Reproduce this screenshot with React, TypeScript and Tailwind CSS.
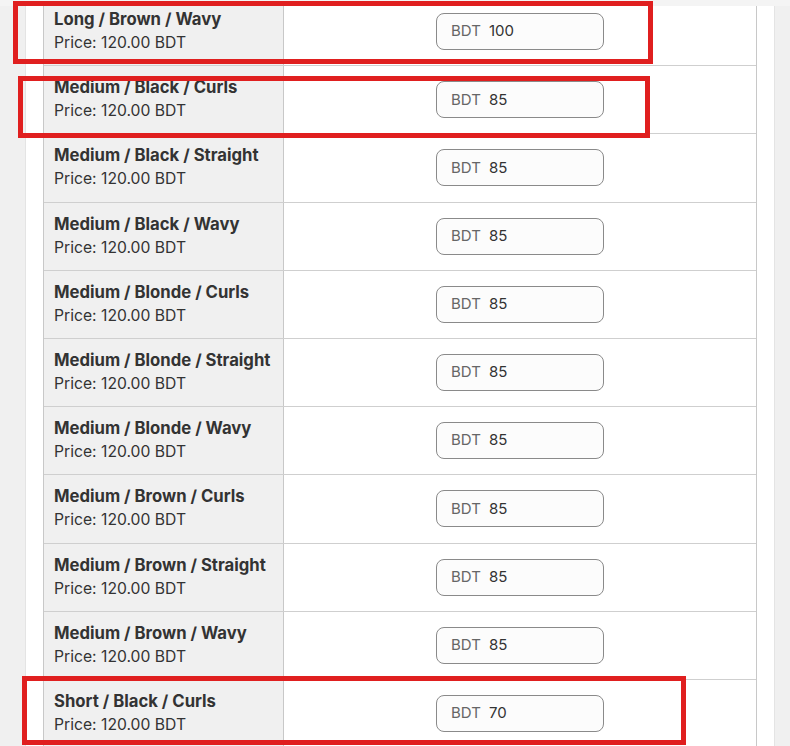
import React from "react";

const rows = [
  { name: "Long / Brown / Wavy", price: "100" },
  { name: "Medium / Black / Curls", price: "85" },
  { name: "Medium / Black / Straight", price: "85" },
  { name: "Medium / Black / Wavy", price: "85" },
  { name: "Medium / Blonde / Curls", price: "85" },
  { name: "Medium / Blonde / Straight", price: "85" },
  { name: "Medium / Blonde / Wavy", price: "85" },
  { name: "Medium / Brown / Curls", price: "85" },
  { name: "Medium / Brown / Straight", price: "85" },
  { name: "Medium / Brown / Wavy", price: "85" },
  { name: "Short / Black / Curls", price: "70" },
];

export default function App() {
  return (
    <div
      className="relative h-[746px] w-[790px] overflow-hidden bg-[#f0f0f0]"
      style={{ fontFamily: "Inter, 'Noto Sans', sans-serif" }}
    >
      <div className="h-[6px] bg-[#f4f4f4]" />
      <div className="ml-[25px] h-[740px] w-[750px] overflow-hidden border-x border-[#e4e4e4] bg-white px-[17px]">
        <div className="-mt-[8px] border-x border-[#c8c8c8]">
          {rows.map((r, i) => (
            <div key={i} className="flex h-[68.2px] border-b border-[#cfcfcf]">
              <div className="flex w-[240px] flex-col justify-center border-r border-[#c8c8c8] bg-[#f0f0f0] pl-[10px] pb-[1px]">
                <div className="whitespace-nowrap text-[16.7px] font-bold leading-[23px] text-[#333]">{r.name}</div>
                <div className="whitespace-nowrap text-[15.7px] leading-[23px] text-[#333]">Price: 120.00 BDT</div>
              </div>
              <div className="flex flex-1 items-center justify-center">
                <div className="flex h-[37px] w-[168px] items-center rounded-[8px] border border-[#8a8a8a] bg-[#fcfcfc] px-[14px] text-[15px]">
                  <span className="text-[#666]">BDT</span>
                  <span className="ml-[8px] text-[#333]">{r.price}</span>
                </div>
              </div>
            </div>
          ))}
        </div>
      </div>
      <div className="pointer-events-none absolute left-[13px] top-[1px] h-[63px] w-[640px] border-[5px] border-[#e01f1f]" />
      <div className="pointer-events-none absolute left-[18px] top-[76px] h-[62px] w-[632px] border-[5px] border-[#e01f1f]" />
      <div className="pointer-events-none absolute left-[22px] top-[676px] h-[69px] w-[664px] border-[5px] border-[#e01f1f]" />
    </div>
  );
}
